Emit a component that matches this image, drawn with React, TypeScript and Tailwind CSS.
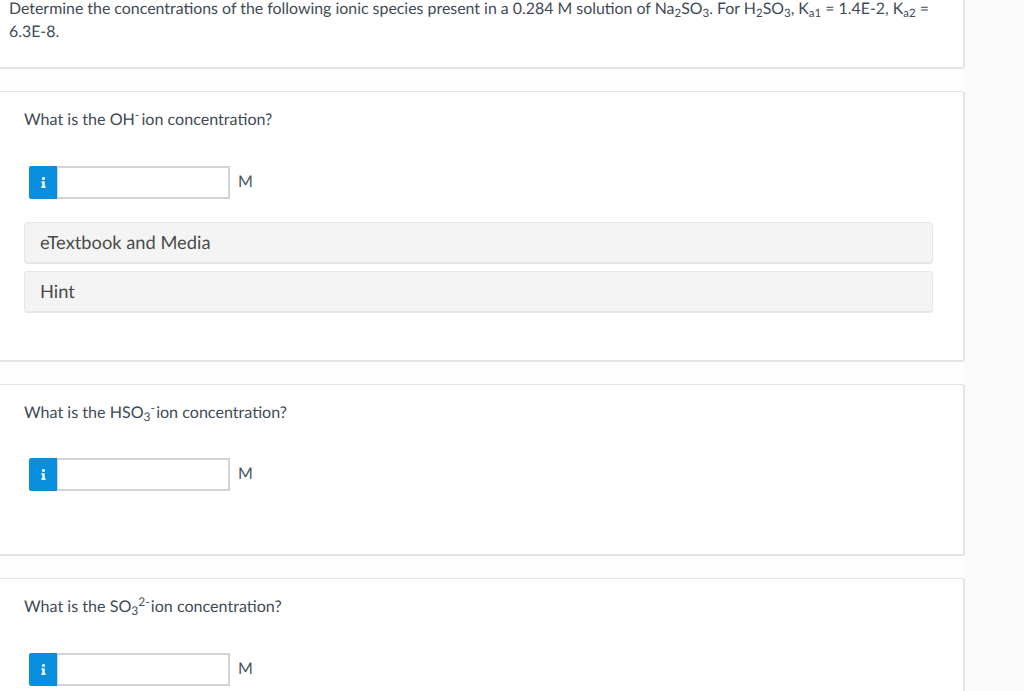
import type { ReactNode } from 'react';
import { FaInfo } from 'react-icons/fa';

function AnswerRow() {
  return (
    <div className="flex items-center">
      <div className="flex h-[33px] w-[28px] items-center justify-center rounded-l-[2px] bg-[#0a8fdf] text-white">
        <FaInfo className="h-[11px] w-[11px]" aria-hidden="true" />
      </div>
      <div className="h-[33px] w-[173px] border-2 border-l border-[#d4d4d4] bg-white" />
      <span className="ml-[8px] -translate-y-px text-[16px] text-[#4a5560]">M</span>
    </div>
  );
}

function Panel({ label }: { label: string }) {
  return (
    <div className="flex h-[42px] w-[909px] items-center rounded-[4px] border border-b-2 border-[#e6e6e6] bg-[#f4f4f4] pl-[15px] text-[18.3px] text-[#4a4a4a]">
      {label}
    </div>
  );
}

function Card({ className, children }: { className: string; children: ReactNode }) {
  return (
    <section className={`rounded-r-[3px] border-t border-r-2 border-b-2 border-[#e4e4e4] bg-white pl-[24px] ${className}`}>
      {children}
    </section>
  );
}

function Question({ className, children }: { className: string; children: ReactNode }) {
  return <p className={`text-[16.1px] leading-[24px] text-[#3f4b56] ${className}`}>{children}</p>;
}

export default function App() {
  return (
    <div className="flex h-[691px] overflow-hidden bg-[#fafafa] font-['Lato',sans-serif] [text-rendering:geometricPrecision]">
      <main className="flex w-[965px] shrink-0 flex-col gap-[22px] bg-[#fdfdfd]">
        <section className="h-[69px] shrink-0 overflow-hidden rounded-br-[3px] border-r-2 border-b-2 border-[#e4e4e4] bg-white pl-[9px] text-[15.9px] leading-[23px] text-[#3f4b56]">
          <p className="-mt-[3px] w-[930px]">
            Determine the concentrations of the following ionic species present in a 0.284 M solution of Na<sub className="text-[11.5px]">2</sub>SO<sub className="text-[11.5px]">3</sub>. For H<sub className="text-[11.5px]">2</sub>SO<sub className="text-[11.5px]">3</sub>, K<sub className="text-[11.5px]">a1</sub> = 1.4E-2, K<sub className="text-[11.5px]">a2</sub> = 6.3E-8.
          </p>
        </section>

        <Card className="h-[271px] shrink-0">
          <Question className="pt-[16px]">
            What is the OH<sup className="-mr-[2px] text-[12px]">-</sup> ion concentration?
          </Question>
          <div className="ml-[5px] mt-[34px]">
            <AnswerRow />
          </div>
          <div className="mt-[23px] flex flex-col gap-[7px]">
            <Panel label="eTextbook and Media" />
            <Panel label="Hint" />
          </div>
        </Card>

        <Card className="h-[172px] shrink-0">
          <Question className="pt-[16px]">
            What is the HSO<sub className="text-[12px]">3</sub><sup className="-mr-[3px] text-[12px]">-</sup> ion concentration?
          </Question>
          <div className="ml-[5px] mt-[33px]">
            <AnswerRow />
          </div>
        </Card>

        <Card className="h-[172px] shrink-0">
          <Question className="pt-[16px]">
            What is the SO<sub className="text-[12px]">3</sub><sup className="-mr-[3px] text-[12px]">2-</sup> ion concentration?
          </Question>
          <div className="ml-[5px] mt-[34px]">
            <AnswerRow />
          </div>
        </Card>
      </main>
    </div>
  );
}
